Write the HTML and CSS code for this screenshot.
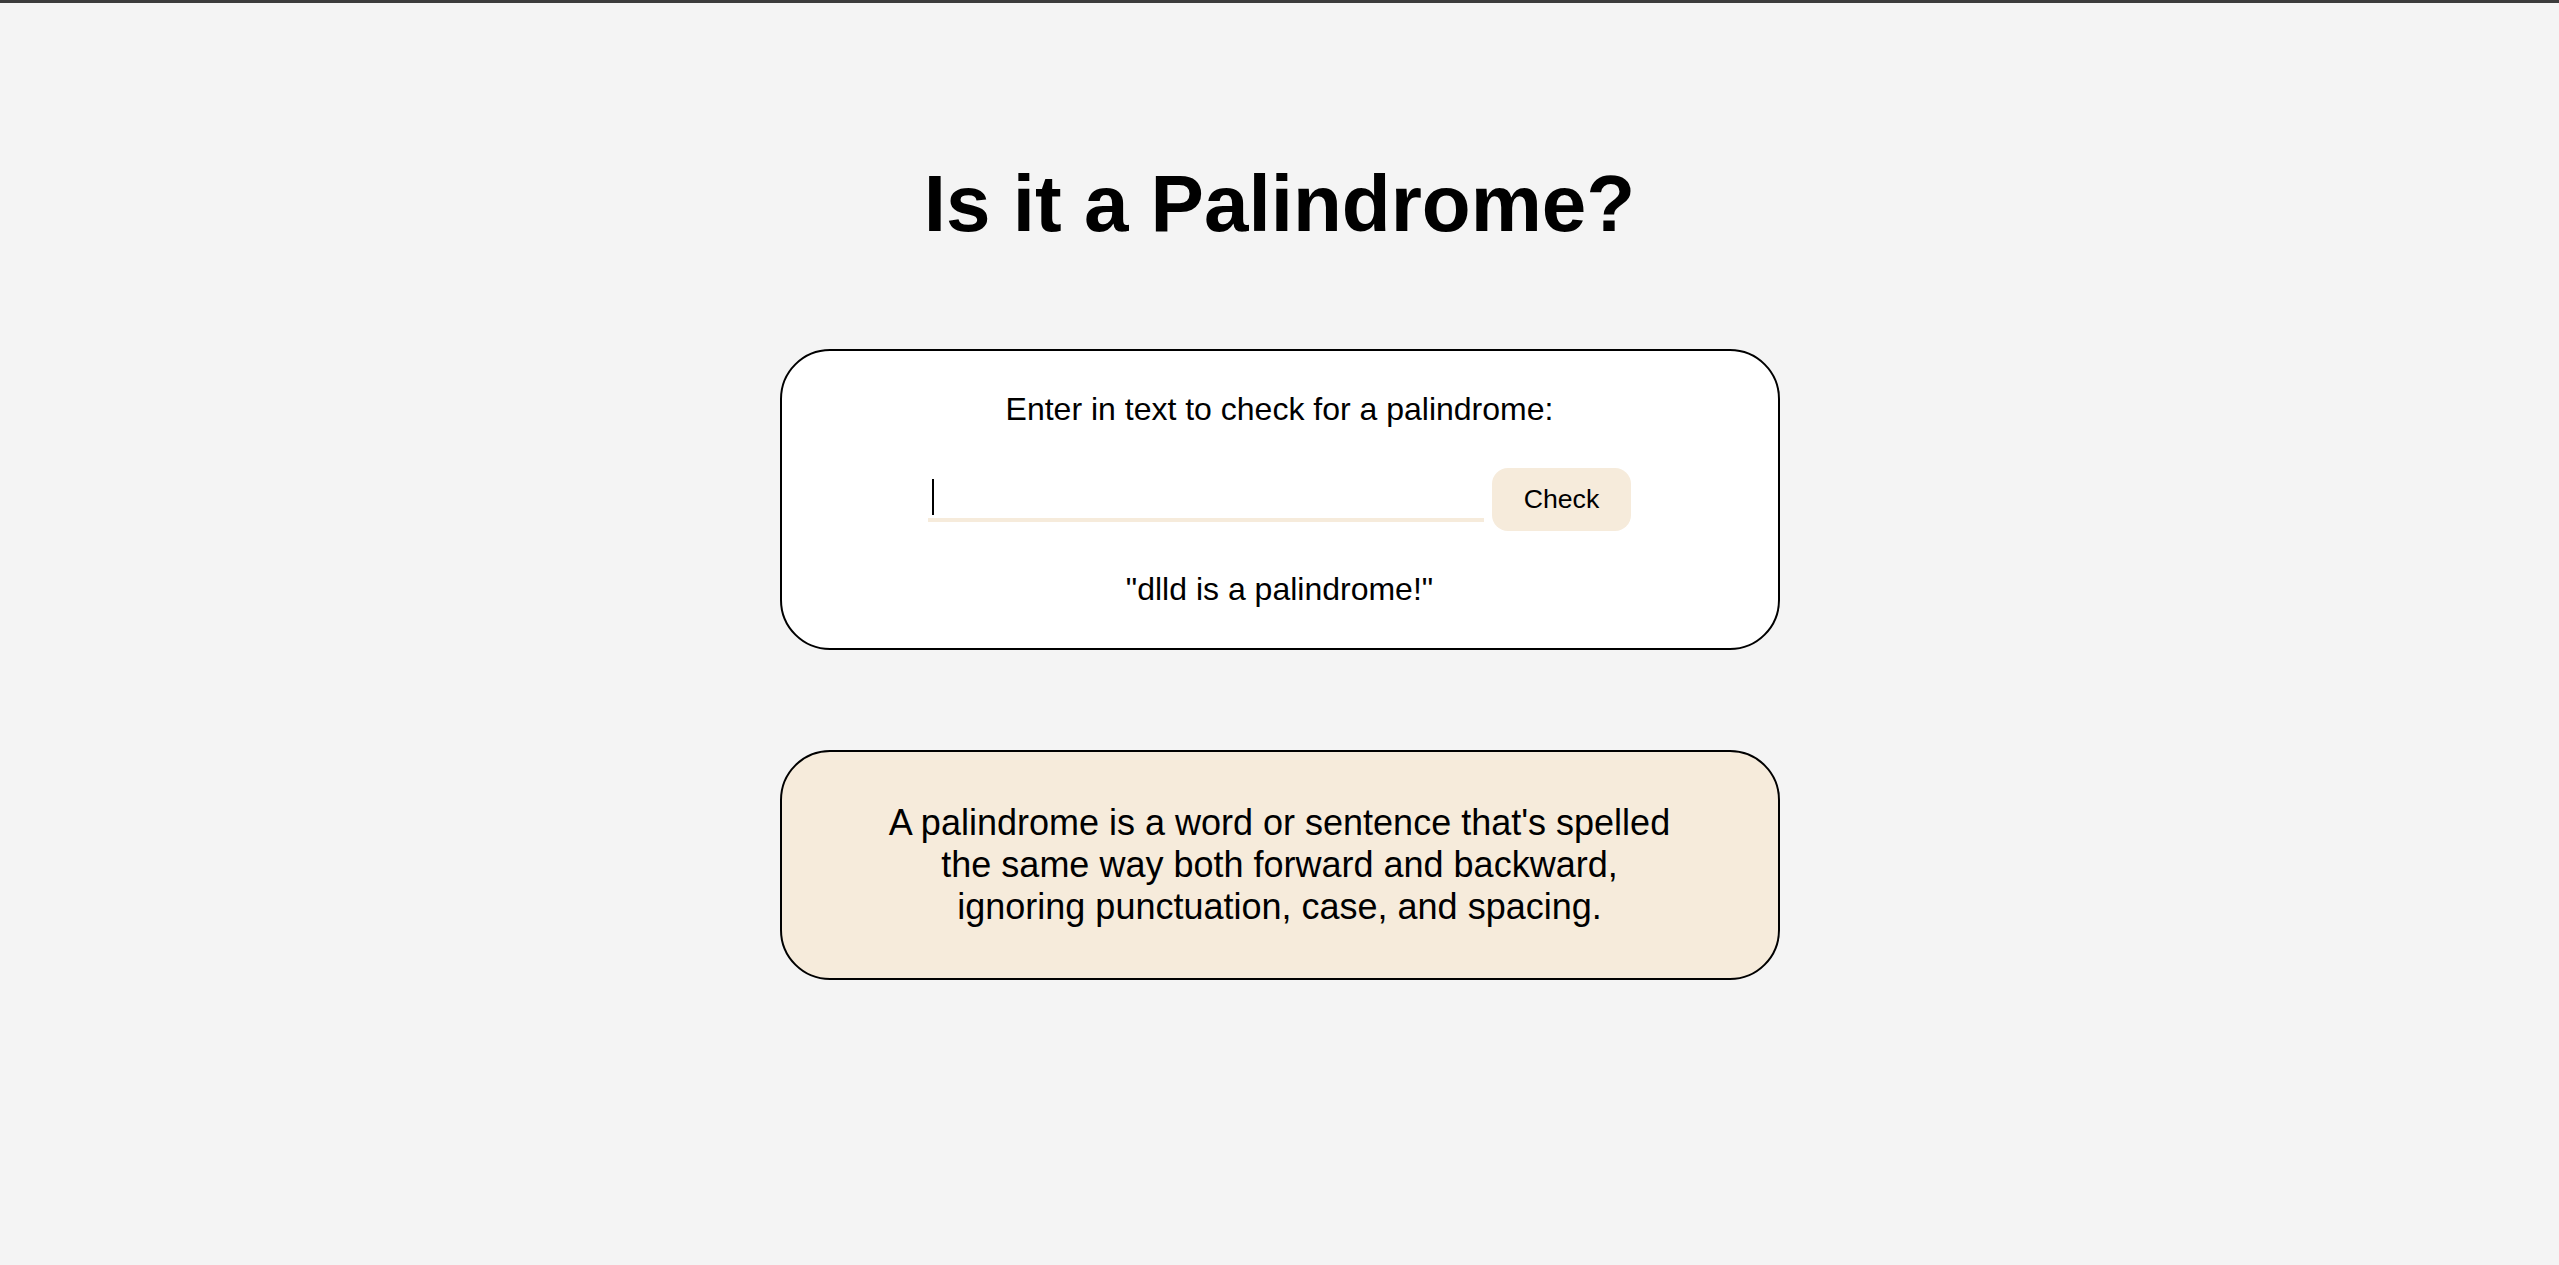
FILE: index.html
```html
<!DOCTYPE html>
<html lang="en">
<head>
<meta charset="utf-8">
<title>Palindrome Checker</title>
<link rel="stylesheet" href="styles.css">
</head>
<body>
<div class="topbar"></div>
<main class="page">
  <h1 class="title">Is it a Palindrome?</h1>
  <section class="card checker">
    <p class="label">Enter in text to check for a palindrome:</p>
    <div class="row">
      <span class="field">
        <input class="text-input" type="text" autofocus>
        <span class="caret"></span>
      </span>
      <button class="check-btn" type="button">Check</button>
    </div>
    <p class="result">"dlld is a palindrome!"</p>
  </section>
  <section class="card info">
    <p class="info-text">A palindrome is a word or sentence that's spelled the same way both forward and backward, ignoring punctuation, case, and spacing.</p>
  </section>
</main>
</body>
</html>
```
FILE: styles.css
```css
html, body {
  margin: 0;
  padding: 0;
}
body {
  background: #f4f4f4;
  font-family: "Liberation Sans", Arial, sans-serif;
  color: #000;
}
.topbar {
  height: 3px;
  background: #3c3c3c;
}
.page {
  display: flex;
  flex-direction: column;
  align-items: center;
  padding-top: 155px;
}
.title {
  margin: 0;
  font-size: 80px;
  font-weight: bold;
  line-height: normal;
}
.card {
  box-sizing: border-box;
  width: 1000px;
  border: 2px solid #000;
  border-radius: 50px;
  display: flex;
  flex-direction: column;
  align-items: center;
}
.checker {
  margin-top: 99px;
  background: #fff;
  padding: 40px 0;
  gap: 40px;
}
.label, .result {
  margin: 0;
  font-size: 32px;
  line-height: normal;
}
.row {
  display: flex;
  align-items: center;
  gap: 8px;
}
.field {
  position: relative;
  display: flex;
}
.text-input {
  box-sizing: border-box;
  width: 556px;
  font-family: "Liberation Sans", Arial, sans-serif;
  font-size: 32px;
  line-height: normal;
  padding: 2px 4px;
  border: none;
  border-bottom: 4px solid #f6ebdb;
  background: #fff;
  outline: none;
  caret-color: transparent;
}
.caret {
  position: absolute;
  left: 4px;
  top: 2px;
  width: 2px;
  height: 36px;
  background: #000;
}
.check-btn {
  font-family: "Liberation Sans", Arial, sans-serif;
  font-size: 26.667px;
  line-height: normal;
  padding: 16px 32px;
  border: none;
  border-radius: 16px;
  background: #f6ebdb;
  color: #000;
}
.info {
  margin-top: 100px;
  background: #f6ebdb;
  padding: 50px 0;
}
.info-text {
  margin: 0;
  width: 800px;
  text-align: center;
  font-size: 36px;
  line-height: normal;
}
```
